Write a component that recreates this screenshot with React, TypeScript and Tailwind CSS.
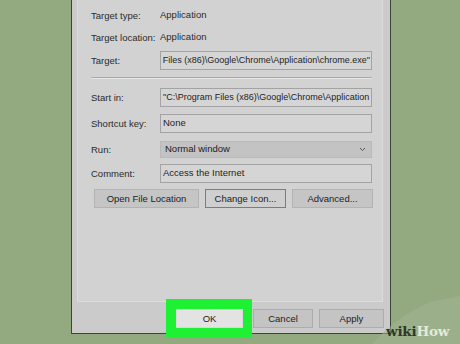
import React from "react";

const font = { fontFamily: '"Liberation Sans", Arial, sans-serif' };

function Label({ children }: { children: React.ReactNode }) {
  return <div className="w-[69px] shrink-0 text-[9.5px] text-[#2b2b2b] leading-none pt-[1px]">{children}</div>;
}

function Box({ children, className = "" }: { children?: React.ReactNode; className?: string }) {
  return (
    <div
      className={
        "w-[212px] h-full border border-[#a3a3a3] bg-[#d5d5d5] overflow-hidden whitespace-nowrap text-[9.5px] text-[#1e1e1e] flex " +
        className
      }
    >
      {children}
    </div>
  );
}

function Btn({ children, className = "" }: { children: React.ReactNode; className?: string }) {
  return (
    <div
      className={
        "h-[19px] flex items-center justify-center border text-[9.5px] text-[#222] leading-none " + className
      }
    >
      {children}
    </div>
  );
}

export default function App() {
  return (
    <div className="relative w-[460px] h-[344px] bg-[#93aa81] overflow-hidden" style={font}>
      <div className="ml-[71px] w-[320px] h-[334px] bg-[#cbcbcb] border-x border-b border-[#3d4438] flex flex-col">
        <div className="ml-[5px] w-[306px] h-[302px] bg-[#d2d2d2] border-x border-b border-[#dcdcdc] pl-[13px] pt-[4px] flex flex-col">
          <div className="h-[22px] flex items-center">
            <Label>Target type:</Label>
            <span className="text-[9.5px] text-[#2b2b2b] pt-[1px]">Application</span>
          </div>
          <div className="h-[22px] flex items-center">
            <Label>Target location:</Label>
            <span className="text-[9.5px] text-[#2b2b2b] pt-[1px]">Application</span>
          </div>
          <div className="mt-[3px] h-[19px] flex items-center">
            <Label>Target:</Label>
            <Box className="items-center justify-end pr-[1px]">
              <span className="text-[9px]">Files (x86)\Google\Chrome\Application\chrome.exe"</span>
            </Box>
          </div>
          <div className="mt-[7px] ml-[0px] w-[281px] h-[2px] border-t border-[#a9a9a9] border-b border-b-[#e6e6e6]" />
          <div className="mt-[9px] h-[19px] flex items-center">
            <Label>Start in:</Label>
            <Box className="items-center pl-[2px]">
              <span className="text-[9px]">"C:\Program Files (x86)\Google\Chrome\Application</span>
            </Box>
          </div>
          <div className="mt-[7px] h-[19px] flex items-center">
            <Label>Shortcut key:</Label>
            <Box className="items-start pl-[2px] pt-[1px]">
              <span>None</span>
            </Box>
          </div>
          <div className="mt-[8px] h-[17px] flex items-center">
            <Label>Run:</Label>
            <div className="w-[212px] h-full bg-[#c3c3c3] border border-[#b9b9b9] flex items-center justify-between pl-[4px] pr-[5px] text-[9.5px] text-[#222]">
              <span>Normal window</span>
              <svg width="7" height="5" viewBox="0 0 7 5">
                <path d="M1 1 L3.5 3.5 L6 1" fill="none" stroke="#555" strokeWidth="1" />
              </svg>
            </div>
          </div>
          <div className="mt-[6px] h-[19px] flex items-center">
            <Label>Comment:</Label>
            <Box className="items-start pl-[2px] pt-[1px]">
              <span>Access the Internet</span>
            </Box>
          </div>
          <div className="mt-[6px] ml-[3px] flex gap-[6px]">
            <Btn className="w-[105px] bg-[#c5c5c5] border-[#b3b3b3]">Open File Location</Btn>
            <Btn className="w-[81px] bg-[#cfcfcf] border-[#5b7fc4]">Change Icon...</Btn>
            <Btn className="w-[81px] bg-[#c5c5c5] border-[#b3b3b3]">Advanced...</Btn>
          </div>
        </div>
        <div className="mt-[7px] pl-[94px] flex items-center">
          <div className="-my-[10px] py-[10px] pl-[10px] pr-[9px] bg-[#1ef134] relative z-10">
            <Btn className="w-[67px] bg-[#e3e3e3] border-[#d8d8d8]">OK</Btn>
          </div>
          <Btn className="ml-[1px] w-[60px] bg-[#c4c4c4] border-[#adadad]">Cancel</Btn>
          <Btn className="ml-[6px] w-[65px] bg-[#c4c4c4] border-[#adadad]">Apply</Btn>
        </div>
      </div>
      <svg className="absolute left-0 top-0" width="460" height="344" viewBox="0 0 460 344">
        <path d="M372 344 Q 395 318 430 302 L460 296 L460 344 Z" fill="#a2b592" opacity="0.55" />
      </svg>
      <div
        className="absolute left-[386px] top-[325px] text-[13.5px] font-bold leading-none tracking-[-0.2px]"
        style={{ fontFamily: '"DejaVu Serif", Georgia, serif' }}
      >
        <span className="text-[#2d3828]">wiki</span>
        <span className="text-[#e4eadc]">How</span>
      </div>
    </div>
  );
}
